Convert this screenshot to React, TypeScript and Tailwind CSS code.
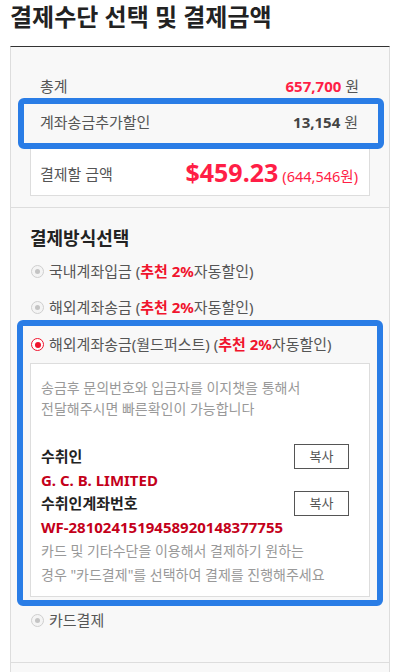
import React from "react";

const FONT = { fontFamily: '"Noto Sans", "Noto Sans CJK KR", sans-serif' };

function Radio({ checked = false }: { checked?: boolean }) {
  if (checked) {
    return (
      <span className="flex h-[13px] w-[13px] shrink-0 items-center justify-center rounded-full border-[1.5px] border-[#f0142d] bg-white">
        <span className="h-[6px] w-[6px] rounded-full bg-[#f0142d]" />
      </span>
    );
  }
  return (
    <span className="flex h-[13px] w-[13px] shrink-0 items-center justify-center rounded-full border border-[#cfcfcf] bg-[#f4f4f4]">
      <span className="h-[5px] w-[5px] rounded-full bg-[#c4c4c4]" />
    </span>
  );
}

function Promo() {
  return (
    <>
      {" "}(<span className="font-bold text-[#f0142d]">추천 2%</span>자동할인)
    </>
  );
}

function CopyBtn() {
  return (
    <button className="flex h-[25px] w-[55px] items-center justify-center border border-[#555] bg-white text-[13px] text-[#555]">
      복사
    </button>
  );
}

export default function App() {
  return (
    <div className="w-[401px] h-[672px] overflow-hidden bg-white" style={FONT}>
      <div className="h-[34px] pl-[10px] text-[24px] font-bold leading-[34px] text-[#222]">
        결제수단 선택 및 결제금액
      </div>
      <div className="mt-[12px] ml-[10px] w-[380px] border-x border-t border-x-[#dddddd] border-t-[#333] bg-[#f8f8f8]">
        {/* Section 1 */}
        <div className="border-b border-[#dddddd] px-[19px] pt-[27px] pb-[11px]">
          <div className="flex h-[24px] items-center justify-between pl-[10px] pr-[11px]">
            <span className="text-[15px] text-[#555]">총계</span>
            <span className="text-[15px] text-[#555]">
              <span className="font-bold text-[#ff1e46]">657,700</span> 원
            </span>
          </div>
          <div className="-ml-[12px] -mr-[14px] flex h-[51px] items-center justify-between rounded-[6px] border-[6px] border-[#2a7de6] pb-[3px] pl-[16px] pr-[20px]">
            <span className="text-[15px] text-[#555]">계좌송금추가할인</span>
            <span className="text-[15px] text-[#555]">
              <span className="font-bold text-[#444]">13,154</span> 원
            </span>
          </div>
          <div className="flex h-[47px] items-center justify-between border-x border-b border-[#dddddd] bg-white pl-[9px] pr-[11px] pt-[4px]">
            <span className="text-[15px] text-[#555]">결제할 금액</span>
            <span className="flex items-baseline">
              <span className="text-[25px] font-bold leading-none text-[#ff1e46]">$459.23</span>
              <span className="ml-[4px] text-[14.5px] text-[#ff1e46]">(644,546원)</span>
            </span>
          </div>
        </div>

        {/* Section 2 */}
        <div className="border-b border-[#dddddd] px-[19px] pt-[20px] pb-[28px]">
          <div className="flex h-[20px] items-center text-[18px] font-bold text-[#222]">결제방식선택</div>
          <div className="mt-[10px] flex h-[26px] items-center gap-[5px] pl-[1px] text-[15px] text-[#555]">
            <Radio />
            <span>
              국내계좌입금
              <Promo />
            </span>
          </div>
          <div className="mt-[10px] flex h-[26px] items-center gap-[5px] pl-[1px] text-[15px] text-[#555]">
            <Radio />
            <span>
              해외계좌송금
              <Promo />
            </span>
          </div>
          <div className="-mx-[13px] rounded-[6px] border-[6px] border-[#2a7de6] px-[7px] pb-[3px]">
            <div className="flex h-[37px] items-center gap-[5px] pl-[1px] text-[15px] text-[#555]">
              <Radio checked />
              <span>
                해외계좌송금(월드퍼스트)
                <Promo />
              </span>
            </div>
            <div className="border border-[#dddddd] bg-white pl-[10px] pr-[20px] pt-[13px] pb-[9px]">
              <div className="text-[14px] leading-[21px] text-[#999]">
                송금후 문의번호와 입금자를 이지챗을 통해서
                <br />
                전달해주시면 빠른확인이 가능합니다
              </div>
              <div className="mt-[25px] flex h-[25px] items-center justify-between">
                <span className="text-[15px] font-bold text-[#222]">수취인</span>
                <CopyBtn />
              </div>
              <div className="flex h-[22px] items-center text-[15px] font-bold text-[#c4001a]">G. C. B. LIMITED</div>
              <div className="flex h-[25px] items-center justify-between">
                <span className="text-[15px] font-bold text-[#222]">수취인계좌번호</span>
                <CopyBtn />
              </div>
              <div className="flex h-[22px] items-center text-[15px] font-bold text-[#c4001a]">
                WF-2810241519458920148377755
              </div>
              <div className="mt-[1px] text-[14px] leading-[24px] text-[#999]">
                카드 및 기타수단을 이용해서 결제하기 원하는
                <br />
                경우 "카드결제"를 선택하여 결제를 진행해주세요
              </div>
            </div>
          </div>
          <div className="flex h-[28px] items-center gap-[5px] pl-[1px] text-[15px] text-[#555]">
            <Radio />
            <span>카드결제</span>
          </div>
        </div>
        <div className="h-[40px]" />
      </div>
    </div>
  );
}
